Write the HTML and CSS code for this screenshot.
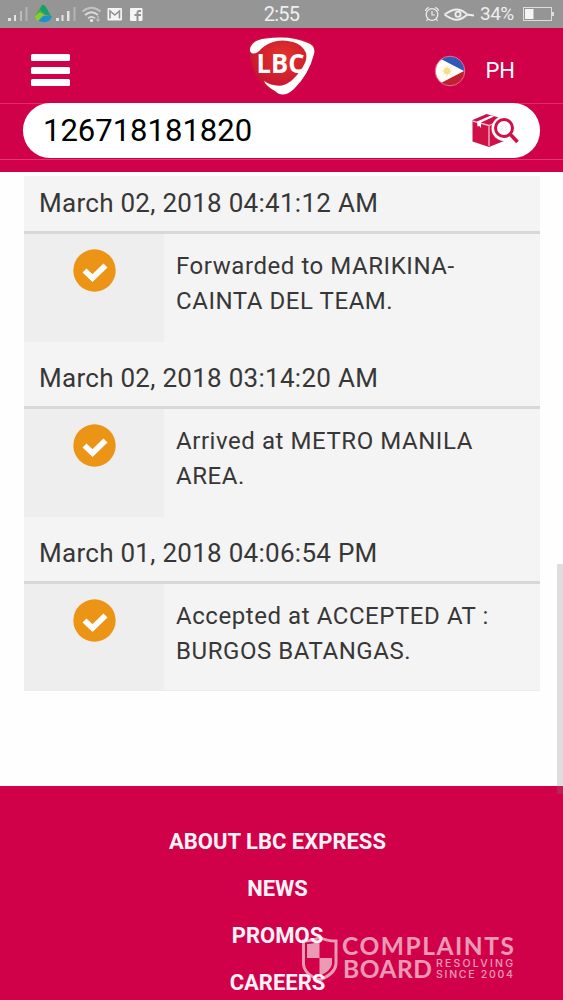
FILE: index.html
```html
<!DOCTYPE html>
<html lang="en">
<head>
    <meta charset="UTF-8" />
    <meta name="viewport" content="width=device-width, initial-scale=1.0" />
    <title>LBC Express - Track</title>
    <link rel="stylesheet" href="styles.css">
</head>
<body>
    <!-- Phone status bar -->
    <div class="status-bar">
        <svg class="status-left" width="150" height="28" viewBox="0 0 150 28">
            <g fill="#e4e4e4">
                <rect x="8" y="18" width="3" height="3"/>
                <rect x="14" y="15" width="2" height="6"/>
                <rect x="20" y="11" width="2" height="10" opacity=".5"/>
                <rect x="25.500" y="7" width="2" height="14" opacity=".4"/>
                <rect x="56" y="18" width="3" height="3"/>
                <rect x="61.500" y="15" width="2" height="6"/>
                <rect x="67" y="11" width="2.500" height="10"/>
                <rect x="73.500" y="7" width="2" height="14" opacity=".4"/>
            </g>
            <path d="M42 5Q45 4 46 8L43 13L38 20Q34 19 35 16Z" fill="#35b44a"/>
            <path d="M42 5Q45 5 47 9L51 16L45 15L40 9Z" fill="#17a06d"/>
            <path d="M35 17L39 13L44 16L52 16Q51 21 46 22Q38 23 35 17Z" fill="#1e91c8"/>
            <path d="M35 16Q35 20 38 21L44 15L40 12Z" fill="#8ccb2e"/>
            <g fill="none" stroke="#dcdcdc" stroke-width="1.700">
                <path d="M82.500 11.500Q91.500 4 100.500 11.500" opacity=".65"/>
                <path d="M85 15Q91.500 9.500 98 15"/>
                <path d="M88 18.300Q91.500 15.300 95 18.300"/>
            </g>
            <circle cx="91.500" cy="20.500" r="1.600" fill="#eee"/>
            <path d="M98 16V21M96.500 19.500L98 21.300L99.500 19.500" stroke="#ccc" fill="none"/>
            <rect x="107.500" y="8" width="14.500" height="12.500" rx="1" fill="#f5f5f5"/>
            <path d="M110 18.500V11L114.800 15L119.500 11V18.500" fill="none" stroke="#929292" stroke-width="1.600"/>
            <rect x="130" y="8" width="12.500" height="13" rx="1" fill="#f5f5f5"/>
            <path d="M137.500 21V12.800Q137.500 11 139.300 11H141M134.500 15H141" fill="none" stroke="#929292" stroke-width="2"/>
        </svg>
        <span class="clock">2:55</span>
        <div class="status-right">
            <svg width="52" height="28" viewBox="0 0 52 28" fill="none" stroke="#ededed">
                <circle cx="8" cy="14.500" r="5.800" stroke-width="1.300"/>
                <path d="M8 11V15H11M1.500 11Q2 8 5 7.500M11 7.500Q14 8 14.500 11M4 19L2.500 21M12 19L13.500 21" stroke-width="1.200"/>
                <path d="M20.500 14.500Q28 9.300 33 9.500Q39 10 43 14.500L50 15.500M20.500 14.500Q28 20 33 19.800Q39 19 43 14.500" stroke-width="1.900"/>
                <circle cx="34" cy="14.300" r="2.600" stroke-width="1.800"/>
            </svg>
            <span class="percent">34%</span>
            <svg width="34" height="28" viewBox="0 0 34 28">
                <rect x="3.500" y="7.500" width="28" height="13" fill="none" stroke="#ddd"/>
                <rect x="5" y="9" width="8.500" height="10" fill="#f4f4f4"/>
                <rect x="32" y="12" width="2" height="4" fill="#ddd"/>
            </svg>
        </div>
    </div>

    <!-- Site header -->
    <header class="navbar">
        <button class="menu-button" aria-label="Menu">
            <span></span>
            <span></span>
            <span></span>
        </button>
        <svg class="logo" width="72" height="62" viewBox="0 0 72 62">
            <defs>
                <radialGradient id="logoRed" cx=".52" cy=".35" r=".6">
                    <stop offset="0" stop-color="#e5352c"/>
                    <stop offset=".6" stop-color="#d0202e"/>
                    <stop offset="1" stop-color="#c40f38"/>
                </radialGradient>
            </defs>
            <path d="M3 16Q2 7 12 4Q35 -1 62 6Q71 9 68 19Q60 48 42 57Q34 62 26 57Q7 46 3 16Z" fill="url(#logoRed)"/>
            <path d="M4 14Q6 5 20 3.500Q45 0 62 8Q70 11 68 19Q63 39 48 54Q37 64 29 56Q20 51 18 46Q26 51.500 36 50.500Q46 48 54 36Q62 26 60 18Q57 10 47 7Q38 4.500 31 6Q21 8 15 14Q10 20 5.500 18Q3.500 17 4 14Z" fill="#fff"/>
            <text class="logo-text" x="10.500" y="38" textLength="48" lengthAdjust="spacingAndGlyphs">LBC</text>
        </svg>
        <div class="country">
            <svg width="32" height="32" viewBox="0 0 32 32">
                <defs>
                    <clipPath id="flagClip"><circle cx="16" cy="16" r="14.500"/></clipPath>
                </defs>
                <g clip-path="url(#flagClip)">
                    <rect width="32" height="16" fill="#3159b8"/>
                    <rect y="16" width="32" height="16" fill="#c21f32"/>
                    <path d="M0 0L5 3L30 16L5 29L0 32Z" fill="#fffdf6"/>
                </g>
                <circle cx="13" cy="16" r="3" fill="#f7d567"/>
                <path d="M13 11V21M8 16H18M9.500 12.500L16.500 19.500M16.500 12.500L9.500 19.500" stroke="#f7df94"/>
                <circle cx="16" cy="16" r="14.800" fill="none" stroke="#dc7593" stroke-width="1"/>
            </svg>
            <span>PH</span>
        </div>
    </header>

    <div class="search-bar">
        <div class="search-box">
            <span class="tracking-number">126718181820</span>
            <svg width="50" height="36" viewBox="0 0 50 36">
                <path d="M1.500 7L15.500 1L33 6V28L18 34L1.500 28.500Z" fill="#cf1049"/>
                <path d="M1.500 8L18 12.500L32 7M18 12.500V33" fill="none" stroke="#f6b9ca" stroke-width="1.300"/>
                <path d="M6 8.500L20 2.500L23 3.500L10 9.500V15L8.300 13L6.500 13.500Z" fill="#fff"/>
                <circle cx="33" cy="15.500" r="12.500" fill="#fff"/>
                <circle cx="33" cy="15" r="8.500" fill="#fff" stroke="#cf1049" stroke-width="3"/>
                <path d="M39.500 21.500L46.500 29" stroke="#cf1049" stroke-width="3.600"/>
            </svg>
        </div>
    </div>

    <!-- Tracking history -->
    <main class="history">
        <section class="event">
            <h2>March 02, 2018 04:41:12 AM</h2>
            <div class="event-row">
                <div class="event-icon">
                    <svg width="43" height="43" viewBox="0 0 43 43">
                        <circle cx="21.500" cy="21.500" r="21.200" fill="#ec9415"/>
                        <path d="M11.500 21.500L19.500 29L32.500 16.500" fill="none" stroke="#fff" stroke-width="5.800"/>
                    </svg>
                </div>
                <p>Forwarded to MARIKINA-<br>CAINTA DEL TEAM.</p>
            </div>
        </section>
        <section class="event">
            <h2>March 02, 2018 03:14:20 AM</h2>
            <div class="event-row">
                <div class="event-icon">
                    <svg width="43" height="43" viewBox="0 0 43 43">
                        <circle cx="21.500" cy="21.500" r="21.200" fill="#ec9415"/>
                        <path d="M11.500 21.500L19.500 29L32.500 16.500" fill="none" stroke="#fff" stroke-width="5.800"/>
                    </svg>
                </div>
                <p>Arrived at METRO MANILA<br>AREA.</p>
            </div>
        </section>
        <section class="event">
            <h2>March 01, 2018 04:06:54 PM</h2>
            <div class="event-row">
                <div class="event-icon">
                    <svg width="43" height="43" viewBox="0 0 43 43">
                        <circle cx="21.500" cy="21.500" r="21.200" fill="#ec9415"/>
                        <path d="M11.500 21.500L19.500 29L32.500 16.500" fill="none" stroke="#fff" stroke-width="5.800"/>
                    </svg>
                </div>
                <p>Accepted at ACCEPTED AT :<br>BURGOS BATANGAS.</p>
            </div>
        </section>
    </main>

    <footer class="footer">
        <a>ABOUT LBC EXPRESS</a>
        <a>NEWS</a>
        <a>PROMOS</a>
        <a>CAREERS</a>
    </footer>

    <div class="scroll-thumb"></div>

    <!-- Watermark -->
    <svg class="watermark" width="220" height="65" viewBox="0 -10 220 65">
        <path d="M2.500 6Q11 6 18.500 2.500Q26 6 35 6V29Q34 39 18.500 45Q3 39 2.500 29Z" fill="none" stroke="#fff" stroke-width="3"/>
        <path d="M18.500 6V23H6V9Q13 9 18.500 6ZM18.500 23H31V29Q30 36 18.500 41Z" fill="#fff"/>
        <g class="watermark-text">
            <text x="41" y="20" font-size="24.500" textLength="172">COMPLAINTS</text>
            <text x="42" y="42.500" font-size="24.500" textLength="89">BOARD</text>
            <g class="watermark-small">
                <text x="135" y="32" textLength="77">RESOLVING</text>
                <text x="135" y="42.500" textLength="77">SINCE 2004</text>
            </g>
        </g>
    </svg>
</body>
</html>
```
FILE: styles.css
```css
body {
    margin: 0;
    height: 1000px;
    overflow: hidden;
    position: relative;
    display: flex;
    flex-direction: column;
    background: #fefefe;
    color: #373737;
    font-family: Roboto, "Liberation Sans", sans-serif;
}

/* Status bar */
.status-bar {
    height: 28px;
    flex-shrink: 0;
    display: grid;
    grid-template-columns: 1fr 40px 1fr;
    background: #959595;
    color: #efefef;
}

.clock {
    font-size: 20px;
    line-height: 29px;
    letter-spacing: -0.8px;
    text-align: center;
    white-space: nowrap;
}

.status-right {
    display: flex;
    justify-content: flex-end;
    padding-right: 9px;
}

.percent {
    width: 40px;
    margin-left: 4px;
    font-size: 19px;
    line-height: 28px;
    letter-spacing: -0.5px;
    white-space: nowrap;
}

/* Header */
.navbar {
    height: 75px;
    flex-shrink: 0;
    box-sizing: border-box;
    display: grid;
    grid-template-columns: 1fr 72px 1fr;
    background: #d00049;
}

.menu-button {
    width: 39px;
    height: 32px;
    margin: 26px 0 0 31px;
    padding: 0;
    border: none;
    background: none;
    display: flex;
    flex-direction: column;
    justify-content: space-between;
}

.menu-button span {
    width: 100%;
    height: 7px;
    border-radius: 1.5px;
    background: #fff;
}

.logo {
    margin-top: 7px;
}

.logo-text {
    font: bold 26px "Open Sans", sans-serif;
    fill: #fff;
}

.country {
    display: flex;
    align-items: center;
    justify-content: flex-end;
    gap: 19px;
    padding: 10px 48px 0 0;
    color: #fff;
    font-size: 22px;
}

.search-bar {
    height: 69px;
    flex-shrink: 0;
    box-sizing: border-box;
    padding: 0 23px;
    background: linear-gradient(#dd2d61 1px, #d00049 1px 56px, #df3a6c 56px 57px, #d00049 57px);
}

.search-box {
    height: 55px;
    box-sizing: border-box;
    padding: 0 19px 0 20px;
    border-radius: 27px;
    background: #fff;
    display: flex;
    align-items: center;
    justify-content: space-between;
}

.tracking-number {
    color: #000;
    font-size: 31px;
}

/* Tracking history */
.history {
    flex-shrink: 0;
    margin: 4px 23px 0 24px;
    background: #f4f4f4;
    border-bottom: 1px solid #ececec;
}

.event h2 {
    height: 55px;
    margin: 0;
    padding-left: 15px;
    border-bottom: 3px solid #d8d8d8;
    font-size: 26px;
    font-weight: normal;
    line-height: 54px;
    letter-spacing: 0.28px;
}

.event + .event h2 {
    padding-top: 9px;
}

.event-row {
    height: 108px;
    display: flex;
}

.event:last-child .event-row {
    height: 106px;
}

.event-icon {
    width: 140px;
    padding-top: 15px;
    box-sizing: border-box;
    text-align: center;
    background: #eee;
}

.event p {
    margin: 0;
    padding: 15px 0 0 12px;
    font-size: 24px;
    line-height: 34.5px;
    letter-spacing: 0.56px;
}

/* Footer */
.footer {
    flex: 1;
    margin-top: 95px;
    padding-top: 32px;
    box-sizing: border-box;
    display: flex;
    flex-direction: column;
    align-items: center;
    background: #d00049;
    color: #fff3f8;
}

.footer a {
    height: 47px;
    flex-shrink: 0;
    font-size: 22px;
    font-weight: bold;
    line-height: 47px;
    margin-right: 8px;
}

.scroll-thumb {
    position: absolute;
    top: 564px;
    right: 0;
    width: 6px;
    height: 230px;
    background: rgba(128, 128, 128, 0.25);
}

.watermark {
    position: absolute;
    left: 301px;
    top: 925px;
    opacity: 0.6;
}

.watermark-text {
    fill: #fff;
    font-family: Lato, sans-serif;
    font-weight: bold;
}

.watermark-small {
    font-family: Inter, sans-serif;
    font-size: 10.5px;
    font-weight: 500;
}
```
